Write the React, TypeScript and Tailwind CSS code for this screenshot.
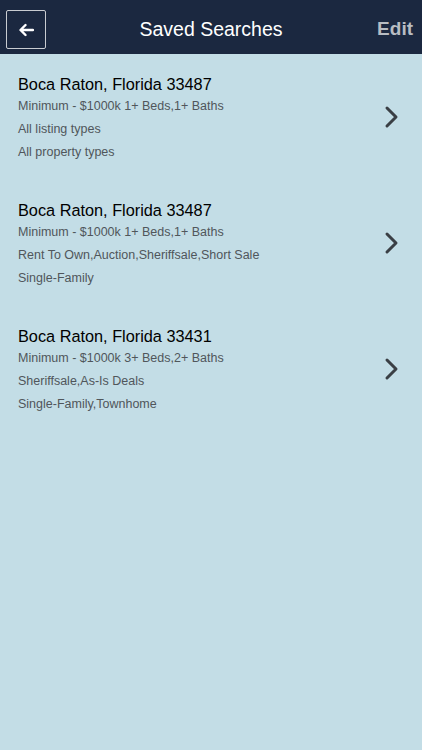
import React from "react";

const searches = [
  {
    title: "Boca Raton, Florida 33487",
    price: "Minimum - $1000k 1+ Beds,1+ Baths",
    listing: "All listing types",
    property: "All property types",
  },
  {
    title: "Boca Raton, Florida 33487",
    price: "Minimum - $1000k 1+ Beds,1+ Baths",
    listing: "Rent To Own,Auction,Sheriffsale,Short Sale",
    property: "Single-Family",
  },
  {
    title: "Boca Raton, Florida 33431",
    price: "Minimum - $1000k 3+ Beds,2+ Baths",
    listing: "Sheriffsale,As-Is Deals",
    property: "Single-Family,Townhome",
  },
];

const Chevron = () => (
  <svg width="16" height="24" viewBox="0 0 16 24" fill="none">
    <path d="M3 3 L12 12 L3 21" stroke="#3a3f45" strokeWidth="3" strokeLinecap="round" strokeLinejoin="round" />
  </svg>
);

const App = () => {
  return (
    <div className="min-h-[750px] w-[422px] bg-[#c3dde6] font-['Liberation_Sans',Arial,sans-serif]">
      {/* Header */}
      <div className="h-[54px] bg-[#1b2840] flex items-center justify-between px-[6px] pt-[5px]">
        <button className="w-[40px] h-[39px] border border-[#c9ccd1] rounded-[2px] flex items-center justify-center">
          <svg width="16" height="14" viewBox="0 0 16 14" fill="none">
            <path d="M15 7 H3 M7.5 2 L2.5 7 L7.5 12" stroke="#ffffff" strokeWidth="2.4" strokeLinecap="round" strokeLinejoin="round" />
          </svg>
        </button>
        <div className="text-white text-[19.5px]">Saved Searches</div>
        <div className="w-[40px] text-right pr-[3px] text-[#b8bcc2] text-[19px] font-bold">Edit</div>
      </div>

      {/* List */}
      <div className="flex flex-col">
        {searches.map((s, i) => (
          <div key={i} className="h-[126px] flex items-start pt-[20px] pl-[18px] pr-[22px]">
            <div className="flex-1 flex flex-col">
              <div className="text-[16.3px] text-black leading-[20px]">{s.title}</div>
              <div className="text-[12.5px] text-[#50565b] leading-[16px] mt-[4px]">{s.price}</div>
              <div className="text-[12.5px] text-[#50565b] leading-[16px] mt-[7px]">{s.listing}</div>
              <div className="text-[12.5px] text-[#50565b] leading-[16px] mt-[7px]">{s.property}</div>
            </div>
            <div className="self-center -mt-[20px]">
              <Chevron />
            </div>
          </div>
        ))}
      </div>
    </div>
  );
};

export default App;
